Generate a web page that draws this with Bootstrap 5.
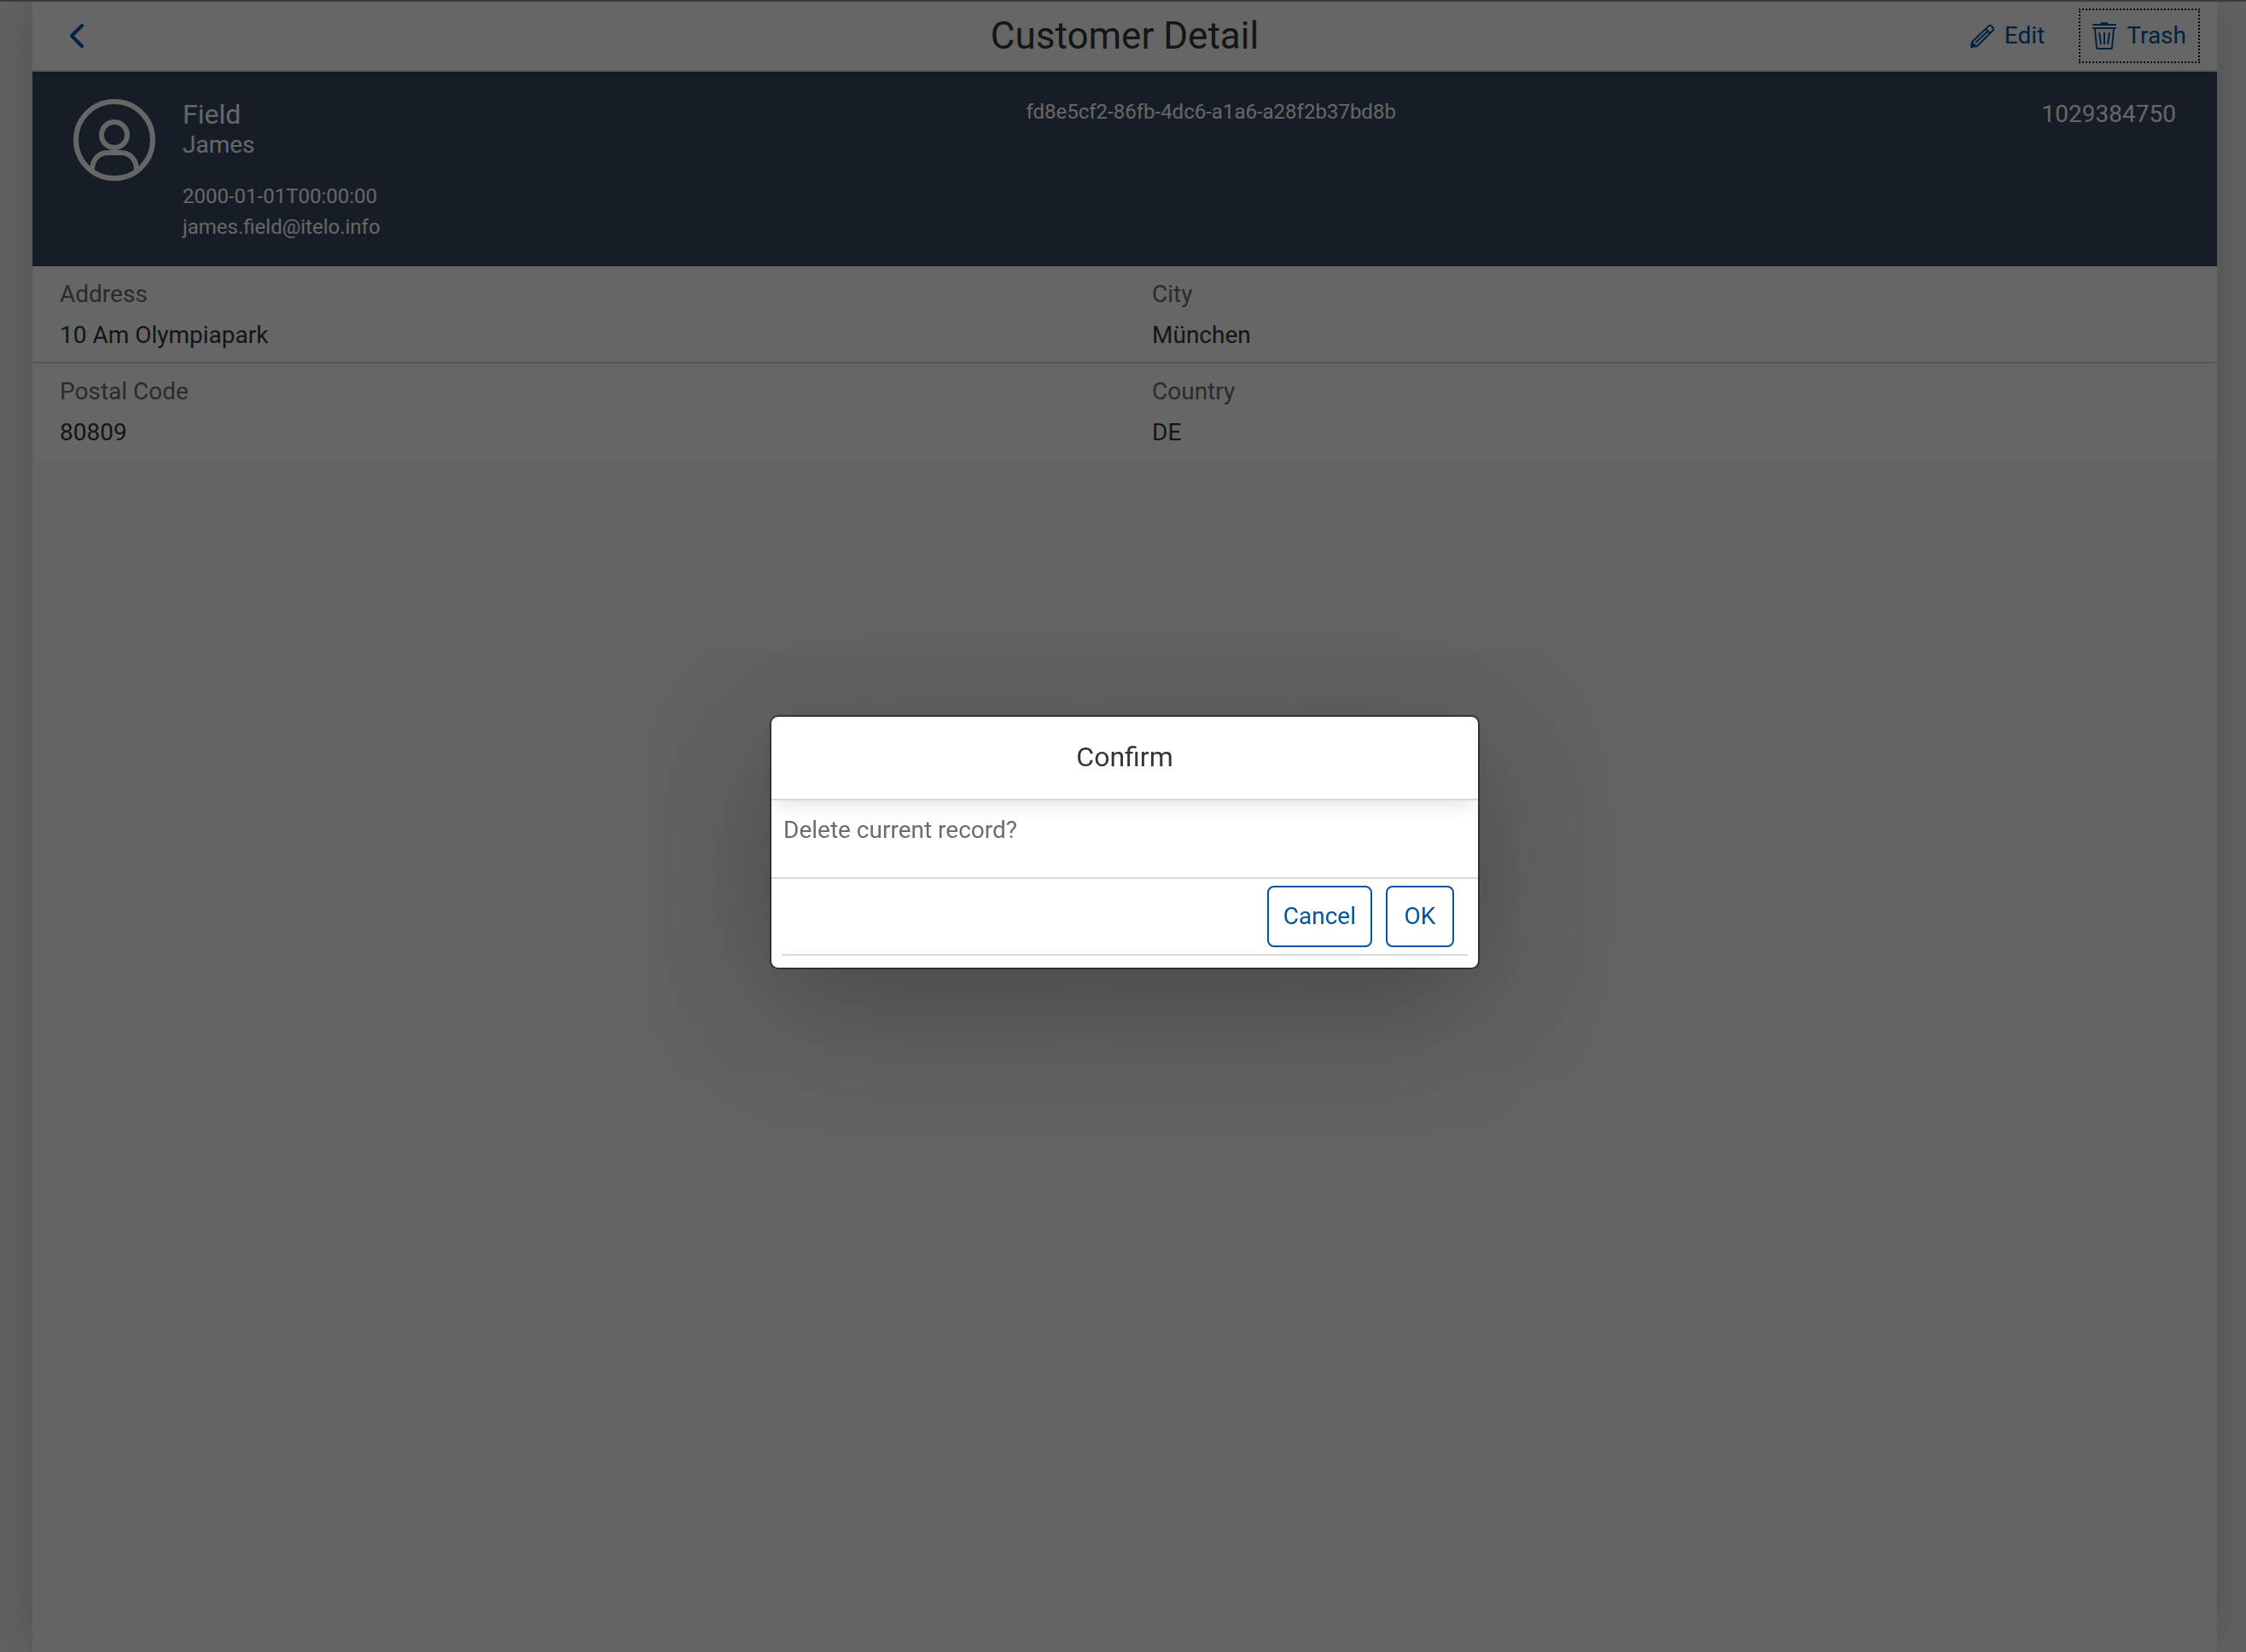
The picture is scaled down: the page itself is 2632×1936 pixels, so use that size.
<!DOCTYPE html>
<html lang="en">
<head>
<meta charset="utf-8">
<meta name="viewport" content="width=device-width, initial-scale=1">
<title>Customer Detail</title>
<link href="https://cdn.jsdelivr.net/npm/bootstrap@5.3.0/dist/css/bootstrap.min.css" rel="stylesheet">
<style>
  :root { --ink: #32363a; --muted: #6a6d70; --action: #0854a0; --line: #d9d9d9; --edge: 2px; }
  body { font-family: Roboto, "Liberation Sans", sans-serif; font-size: 28px; line-height: 36px; color: var(--ink); background: #f7f7f7; }
  .page-frame { padding: 2px 0 0 4px; overflow: hidden; }
  .shell { max-width: 2560px; background: #f8f8f8; box-shadow: 0 0 64px rgba(0,0,0,.2); }
  .top-bar { height: 82px; padding: 0 20px; background: #fff; border-bottom: var(--edge) solid var(--line); }
  .bar-side { flex: 1 1 0; }
  .page-title { font-size: 44px; line-height: 48px; font-weight: 400; }
  .tool-btn { --bs-btn-color: var(--action); --bs-btn-border-width: 2px; --bs-btn-border-radius: 0; --bs-btn-padding-x: 14px; --bs-btn-padding-y: 12px; --bs-btn-font-size: 28px; --bs-btn-line-height: 36px; gap: 12px; }
  .tool-btn.is-focused { border: 2px dotted #000; }
  .summary { padding: 32px 48px 28px; background: #3b4a5f; color: #fff; }
  .summary-small { font-size: 24px; }
  .customer-name { font-size: 32px; }
  .customer-id { line-height: 30px; }
  .field-row { background: #fff; border-bottom: var(--edge) solid var(--line); line-height: 48px; }
  .field-row:last-child { border-color: #fff; }
  .field-cell { padding: 9px 32px 7px; }
  .field-cell dt { font-weight: 400; color: var(--muted); }
  .modal-backdrop.show { opacity: .6; }
  .dialog-layer { padding: 36px 0 0 4px; border-top: 2px solid #3c3c3c; }
  .dialog-box { --bs-modal-width: 828px; }
  .dialog-card { border: 0; border-radius: 8px; color: var(--ink); box-shadow: 0 0 0 2px rgba(0,0,0,.42), 0 40px 160px rgba(0,0,0,.3); }
  .dialog-head { padding: 23px 24px 25px; border-bottom: var(--edge) solid var(--line); box-shadow: 0 8px 20px -4px rgba(0,0,0,.12); }
  .dialog-name { font-size: 32px; line-height: 48px; font-weight: 400; }
  .dialog-text { padding: 17px 14px 37px; color: var(--muted); }
  .dialog-foot { padding: 0 12px 14px; border-top: var(--edge) solid var(--line); }
  .dialog-tools { padding: 8px 16px; border-bottom: var(--edge) solid var(--line); }
  .dialog-btn { --bs-btn-color: var(--action); --bs-btn-border-color: var(--action); --bs-btn-bg: #fff; --bs-btn-border-width: 2px; --bs-btn-border-radius: 8px; --bs-btn-padding-x: 17px; --bs-btn-padding-y: 16px; --bs-btn-font-size: 28px; --bs-btn-line-height: 36px; min-width: 80px; }
  svg { display: block; flex: none; }
</style>
</head>
<body>
<div class="page-frame">
  <main class="shell mx-auto min-vh-100">
    <header class="top-bar d-flex align-items-center">
      <div class="bar-side d-flex">
        <button type="button" class="btn tool-btn" aria-label="Back">
          <svg width="32" height="32" viewBox="0 0 32 32" fill="none" stroke="currentColor" stroke-width="4" stroke-linecap="round" stroke-linejoin="round"><path d="M22 4 10 16l12 12"/></svg>
        </button>
      </div>
      <h1 class="page-title m-0">Customer Detail</h1>
      <div class="bar-side d-flex justify-content-end gap-4">
        <button type="button" class="btn tool-btn d-flex align-items-center">
          <svg width="28" height="28" viewBox="0 0 28 28" fill="none" stroke="currentColor" stroke-width="2" stroke-linejoin="round"><path d="M2 21 22 2q1-1 2 0l3 3q1 1 0 2L8 26l-7 1zM18 6l5 5M6 22 20 9"/><path d="m2 21 6 5-8 2z" fill="currentColor" stroke="none"/></svg>
          Edit
        </button>
        <button type="button" class="btn tool-btn is-focused d-flex align-items-center">
          <svg width="28" height="32" viewBox="0 0 28 32" fill="none" stroke="currentColor" stroke-width="2"><path d="M0 3h28M0 7h28M3 8l2 22q0 1 1 1h16q1 0 1-1l2-22M8 12l2 14M14 12v14M20 12l-2 14"/><path d="M9 2q1-2 3-2h4q2 0 3 2z" fill="currentColor" stroke="none"/></svg>
          Trash
        </button>
      </div>
    </header>

    <section class="summary d-flex justify-content-between align-items-start">
      <div class="d-flex align-items-start">
        <svg width="96" height="96" viewBox="0 0 96 96" fill="none" stroke="currentColor" stroke-width="6"><circle cx="48" cy="48" r="45"/><circle cx="48" cy="42" r="15"/><path d="M22 83c0-12 8-20 18-20h16c10 0 18 8 18 20"/></svg>
        <div class="ps-4 ms-2">
          <div class="customer-name">Field</div>
          <div>James</div>
          <div class="summary-small mt-4">2000-01-01T00:00:00</div>
          <div class="summary-small">james.field@itelo.info</div>
        </div>
      </div>
      <div class="summary-small customer-id">fd8e5cf2-86fb-4dc6-a1a6-a28f2b37bd8b</div>
      <div>1029384750</div>
    </section>

    <section>
      <div class="field-row row g-0">
        <dl class="field-cell col-6 m-0"><dt>Address</dt><dd class="m-0">10 Am Olympiapark</dd></dl>
        <dl class="field-cell col-6 m-0"><dt>City</dt><dd class="m-0">München</dd></dl>
      </div>
      <div class="field-row row g-0">
        <dl class="field-cell col-6 m-0"><dt>Postal Code</dt><dd class="m-0">80809</dd></dl>
        <dl class="field-cell col-6 m-0"><dt>Country</dt><dd class="m-0">DE</dd></dl>
      </div>
    </section>
  </main>
</div>

<div class="modal-backdrop show"></div>
<div class="modal d-block dialog-layer" role="dialog" aria-modal="true" aria-labelledby="confirm-title">
  <div class="modal-dialog modal-dialog-centered dialog-box my-0 mx-auto h-100">
    <div class="modal-content dialog-card">
      <div class="dialog-head text-center"><h2 class="dialog-name m-0" id="confirm-title">Confirm</h2></div>
      <div class="dialog-text">Delete current record?</div>
      <div class="dialog-foot">
        <div class="dialog-tools d-flex justify-content-end gap-3">
          <button type="button" class="btn dialog-btn">Cancel</button>
          <button type="button" class="btn dialog-btn">OK</button>
        </div>
      </div>
    </div>
  </div>
</div>
<script src="https://cdn.jsdelivr.net/npm/bootstrap@5.3.0/dist/js/bootstrap.bundle.min.js"></script>
</body>
</html>
